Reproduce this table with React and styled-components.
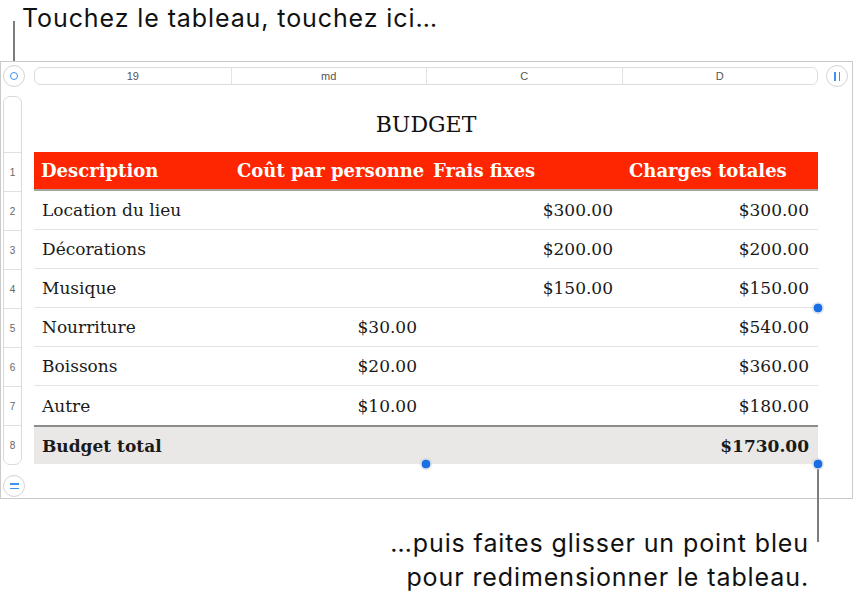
import React from 'react';
import styled, { createGlobalStyle } from 'styled-components';

const GlobalStyle = createGlobalStyle`
  html, body {
    margin: 0;
    padding: 0;
    background: #ffffff;
  }
  body {
    font-family: 'Liberation Sans', Arial, sans-serif;
    color: #111;
  }
`;

const BLUE = '#3a92f3';
const DOT = '#1b6fe3';
const SERIF = "'DejaVu Serif', 'Liberation Serif', Georgia, serif";

// ----- STYLED COMPONENTS START -----
const Page = styled.div`
  width: 854px;
  height: 606px;
  overflow: hidden;
`;

const TopCallout = styled.div`
  display: flex;
  height: 61px;
  padding-left: 13px;
  gap: 7px;
`;

const Leader = styled.div`
  width: 2px;
  height: ${({ h }) => h}px;
  background: #7d7d7d;
  align-self: flex-end;
  flex: none;
`;

const CalloutText = styled.div`
  font-family: Inter, 'Liberation Sans', Arial, sans-serif;
  font-size: 25px;
  line-height: 34px;
  letter-spacing: 0.9px;
  color: #111;
  padding-top: 1px;
  text-align: ${({ align }) => align || 'left'};
`;

const Frame = styled.div`
  box-sizing: border-box;
  width: 853px;
  border: 1px solid #cacaca;
  padding-bottom: 1px;
  display: flex;
  flex-direction: column;
`;

const TopBar = styled.div`
  display: flex;
  align-items: center;
  height: 28px;
  padding-left: 2px;
`;

const Handle = styled.div`
  box-sizing: border-box;
  width: 22px;
  height: 22px;
  border-radius: 50%;
  border: 1px solid #d4d4d4;
  background: #fff;
  display: flex;
  align-items: center;
  justify-content: center;
  flex: none;
`;

const Ring = styled.div`
  box-sizing: border-box;
  width: 8px;
  height: 8px;
  border-radius: 50%;
  border: 1.5px solid ${BLUE};
`;

const Bars = styled.div`
  display: flex;
  flex-direction: ${({ dir }) => dir};
  gap: 3px;
  span {
    display: block;
    background: ${BLUE};
    width: ${({ dir }) => (dir === 'row' ? '1.5px' : '9px')};
    height: ${({ dir }) => (dir === 'row' ? '9px' : '1.5px')};
  }
`;

const ColumnBar = styled.div`
  box-sizing: border-box;
  margin-left: 9px;
  margin-right: 8px;
  width: 784px;
  height: 18px;
  border: 1px solid #dcdcdc;
  border-radius: 6px;
  display: grid;
  grid-template-columns: repeat(4, 1fr);
`;

const ColumnLabel = styled.div`
  display: flex;
  align-items: center;
  justify-content: center;
  font-size: 11px;
  color: #555;
  border-left: ${({ first }) => (first ? 'none' : '1px solid #e3e3e3')};
`;

const Body = styled.div`
  display: flex;
  margin-top: 6px;
  padding-left: 2px;
`;

const RowRail = styled.div`
  box-sizing: border-box;
  width: 19px;
  border: 1px solid #dadada;
  border-radius: 7px;
  display: flex;
  flex-direction: column;
  flex: none;
`;

const RailSpacer = styled.div`
  height: 55px;
`;

const RailCell = styled.div`
  box-sizing: border-box;
  height: 39px;
  border-top: 1px solid #e0e0e0;
  display: flex;
  align-items: center;
  justify-content: center;
  font-size: 10px;
  color: #666;
`;

const TableWrap = styled.div`
  margin-left: 12px;
  width: 784px;
  display: flex;
  flex-direction: column;
`;

const Title = styled.div`
  height: 56px;
  display: flex;
  align-items: center;
  justify-content: center;
  font-family: ${SERIF};
  font-size: 22px;
  color: #111;
`;

const Grid = styled.div`
  position: relative;
  display: grid;
  grid-template-columns: repeat(4, 196px);
`;

const Cell = styled.div`
  box-sizing: border-box;
  height: 39px;
  padding: 0 ${({ head }) => (head ? 0 : 9)}px 0 ${({ head }) => (head ? 7 : 8)}px;
  display: flex;
  align-items: center;
  justify-content: ${({ right }) => (right ? 'flex-end' : 'flex-start')};
  font-family: ${SERIF};
  font-size: ${({ head }) => (head ? 18 : 17)}px;
  font-weight: ${({ bold }) => (bold ? 700 : 400)};
  white-space: nowrap;
  color: ${({ head }) => (head ? '#fff' : '#1a1a1a')};
  background: ${({ head, total }) => (head ? '#fe2600' : total ? '#e9e8e6' : '#fff')};
  border-bottom: ${({ head, last, total }) =>
    head ? '2px solid #a2a2a2' : last || total ? 'none' : '1px solid #e3e3e3'};
  border-top: ${({ total }) => (total ? '2px solid #8c8c8c' : 'none')};
`;

const Dot = styled.div`
  position: absolute;
  width: 9px;
  height: 9px;
  border-radius: 50%;
  background: ${DOT};
  border: 1.5px solid #fff;
  box-shadow: 0 0 1px rgba(0, 0, 0, 0.35);
  transform: translate(-50%, -50%);
`;

const BottomBar = styled.div`
  margin-top: 10px;
  padding-left: 2px;
`;

const BottomCallout = styled.div`
  display: flex;
  justify-content: flex-end;
  align-items: flex-start;
  gap: 9px;
  padding-right: 35px;
`;

const BottomLeader = styled(Leader)`
  align-self: flex-start;
  margin-top: -32px;
`;

const CalloutBlock = styled(CalloutText)`
  margin-top: 27px;
  padding-top: 0;
  margin-right: -1px;
`;
// ----- STYLED COMPONENTS END -----

const rows = [
  ['Location du lieu', '', '$300.00', '$300.00'],
  ['Décorations', '', '$200.00', '$200.00'],
  ['Musique', '', '$150.00', '$150.00'],
  ['Nourriture', '$30.00', '', '$540.00'],
  ['Boissons', '$20.00', '', '$360.00'],
  ['Autre', '$10.00', '', '$180.00'],
];

const headers = ['Description', 'Coût par personne', 'Frais fixes', 'Charges totales'];

export default function App() {
  return (
    <Page>
      <GlobalStyle />
      <TopCallout>
        <Leader h={40} />
        <CalloutText>Touchez le tableau, touchez ici…</CalloutText>
      </TopCallout>

      <Frame>
        <TopBar>
          <Handle><Ring /></Handle>
          <ColumnBar>
            {['19', 'md', 'C', 'D'].map((c, i) => (
              <ColumnLabel key={c} first={i === 0}>{c}</ColumnLabel>
            ))}
          </ColumnBar>
          <Handle>
            <Bars dir="row"><span /><span /></Bars>
          </Handle>
        </TopBar>

        <Body>
          <RowRail>
            <RailSpacer />
            {[1, 2, 3, 4, 5, 6, 7, 8].map((n) => (
              <RailCell key={n}>{n}</RailCell>
            ))}
          </RowRail>

          <TableWrap>
            <Title>BUDGET</Title>
            <Grid>
              {headers.map((h) => (
                <Cell key={h} head bold>{h}</Cell>
              ))}
              {rows.map((r, ri) =>
                r.map((v, ci) => (
                  <Cell key={`${ri}-${ci}`} right={ci > 0} last={ri === rows.length - 1}>
                    {v}
                  </Cell>
                ))
              )}
              <Cell total bold>Budget total</Cell>
              <Cell total />
              <Cell total />
              <Cell total bold right>$1730.00</Cell>

              <Dot style={{ left: '50%', top: '100%' }} />
              <Dot style={{ left: '100%', top: '100%' }} />
              <Dot style={{ left: '100%', top: '50%' }} />
            </Grid>
          </TableWrap>
        </Body>

        <BottomBar>
          <Handle>
            <Bars dir="column"><span /><span /></Bars>
          </Handle>
        </BottomBar>
      </Frame>

      <BottomCallout>
        <CalloutBlock align="right">
          …puis faites glisser un point bleu
          <br />
          pour redimensionner le tableau.
        </CalloutBlock>
        <BottomLeader h={75} />
      </BottomCallout>
    </Page>
  );
}
